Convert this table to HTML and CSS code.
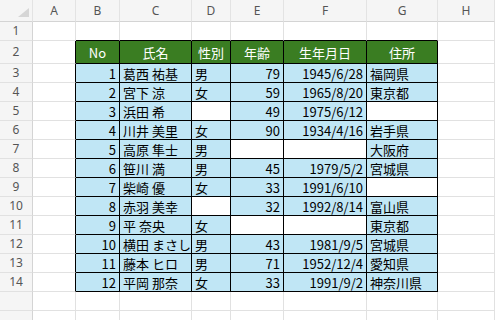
FILE: index.html
```html
<!DOCTYPE html>
<html lang="ja">
<head>
<meta charset="utf-8">
<link rel="stylesheet" href="styles.css">
</head>
<body>
<div class="sheet">
  <div class="r hdr">
    <div class="c w0 corner"><span class="tri"></span></div>
    <div class="c wA ch">A</div>
    <div class="c wB ch">B</div>
    <div class="c wC ch">C</div>
    <div class="c wD ch">D</div>
    <div class="c wE ch">E</div>
    <div class="c wF ch">F</div>
    <div class="c wG ch">G</div>
    <div class="c wH ch">H</div>
  </div>
  <div class="r h19">
    <div class="c w0 rh">1</div>
    <div class="c wA"></div>
    <div class="c wB tt"></div>
    <div class="c wC tt"></div>
    <div class="c wD tt"></div>
    <div class="c wE tt"></div>
    <div class="c wF tt"></div>
    <div class="c wG tt"></div>
    <div class="c wH"></div>
  </div>
  <div class="r h23">
    <div class="c w0 rh">2</div>
    <div class="c wA tl"></div>
    <div class="c wB t th">No</div>
    <div class="c wC t th">氏名</div>
    <div class="c wD t th">性別</div>
    <div class="c wE t th">年齢</div>
    <div class="c wF t th">生年月日</div>
    <div class="c wG t th">住所</div>
    <div class="c wH"></div>
  </div>
  <div class="r h19"><div class="c w0 rh">3</div><div class="c wA tl"></div><div class="c wB t n">1</div><div class="c wC t">葛西 祐基</div><div class="c wD t">男</div><div class="c wE t n">79</div><div class="c wF t n">1945/6/28</div><div class="c wG t">福岡県</div><div class="c wH"></div></div>
  <div class="r h19"><div class="c w0 rh">4</div><div class="c wA tl"></div><div class="c wB t n">2</div><div class="c wC t">宮下 涼</div><div class="c wD t">女</div><div class="c wE t n">59</div><div class="c wF t n">1965/8/20</div><div class="c wG t">東京都</div><div class="c wH"></div></div>
  <div class="r h19"><div class="c w0 rh">5</div><div class="c wA tl"></div><div class="c wB t n">3</div><div class="c wC t">浜田 希</div><div class="c wD t e"></div><div class="c wE t n">49</div><div class="c wF t n">1975/6/12</div><div class="c wG t e"></div><div class="c wH"></div></div>
  <div class="r h19"><div class="c w0 rh">6</div><div class="c wA tl"></div><div class="c wB t n">4</div><div class="c wC t">川井 美里</div><div class="c wD t">女</div><div class="c wE t n">90</div><div class="c wF t n">1934/4/16</div><div class="c wG t">岩手県</div><div class="c wH"></div></div>
  <div class="r h19"><div class="c w0 rh">7</div><div class="c wA tl"></div><div class="c wB t n">5</div><div class="c wC t">高原 隼士</div><div class="c wD t">男</div><div class="c wE t e"></div><div class="c wF t e"></div><div class="c wG t">大阪府</div><div class="c wH"></div></div>
  <div class="r h19"><div class="c w0 rh">8</div><div class="c wA tl"></div><div class="c wB t n">6</div><div class="c wC t">笹川 満</div><div class="c wD t">男</div><div class="c wE t n">45</div><div class="c wF t n">1979/5/2</div><div class="c wG t">宮城県</div><div class="c wH"></div></div>
  <div class="r h19"><div class="c w0 rh">9</div><div class="c wA tl"></div><div class="c wB t n">7</div><div class="c wC t">柴崎 優</div><div class="c wD t">女</div><div class="c wE t n">33</div><div class="c wF t n">1991/6/10</div><div class="c wG t e"></div><div class="c wH"></div></div>
  <div class="r h19"><div class="c w0 rh">10</div><div class="c wA tl"></div><div class="c wB t n">8</div><div class="c wC t">赤羽 美幸</div><div class="c wD t e"></div><div class="c wE t n">32</div><div class="c wF t n">1992/8/14</div><div class="c wG t">富山県</div><div class="c wH"></div></div>
  <div class="r h19"><div class="c w0 rh">11</div><div class="c wA tl"></div><div class="c wB t n">9</div><div class="c wC t">平 奈央</div><div class="c wD t">女</div><div class="c wE t e"></div><div class="c wF t e"></div><div class="c wG t">東京都</div><div class="c wH"></div></div>
  <div class="r h19"><div class="c w0 rh">12</div><div class="c wA tl"></div><div class="c wB t n">10</div><div class="c wC t">横田 まさし</div><div class="c wD t">男</div><div class="c wE t n">43</div><div class="c wF t n">1981/9/5</div><div class="c wG t">宮城県</div><div class="c wH"></div></div>
  <div class="r h19"><div class="c w0 rh">13</div><div class="c wA tl"></div><div class="c wB t n">11</div><div class="c wC t">藤本 ヒロ</div><div class="c wD t">男</div><div class="c wE t n">71</div><div class="c wF t n">1952/12/4</div><div class="c wG t">愛知県</div><div class="c wH"></div></div>
  <div class="r h19"><div class="c w0 rh">14</div><div class="c wA tl"></div><div class="c wB t n">12</div><div class="c wC t">平岡 那奈</div><div class="c wD t">女</div><div class="c wE t n">33</div><div class="c wF t n">1991/9/2</div><div class="c wG t">神奈川県</div><div class="c wH"></div></div>
  <div class="r h19"><div class="c w0 rh"></div><div class="c wA"></div><div class="c wB"></div><div class="c wC"></div><div class="c wD"></div><div class="c wE"></div><div class="c wF"></div><div class="c wG"></div><div class="c wH"></div></div>
  <div class="r h19"><div class="c w0 rh"></div><div class="c wA"></div><div class="c wB"></div><div class="c wC"></div><div class="c wD"></div><div class="c wE"></div><div class="c wF"></div><div class="c wG"></div><div class="c wH"></div></div>
</div>
</body>
</html>
```

FILE: styles.css
```css
html, body {
  margin: 0;
  padding: 0;
  background: #ffffff;
}
body {
  width: 495px;
  height: 320px;
  overflow: hidden;
  font-family: "Noto Sans CJK JP", "Noto Sans", sans-serif;
  font-size: 13px;
  color: #000;
}
.sheet {
  display: flex;
  flex-direction: column;
}
.r {
  display: flex;
  flex: none;
}
.hdr { height: 22px; }
.h19 { height: 19px; }
.h23 { height: 23px; }
.c {
  box-sizing: border-box;
  flex: none;
  display: flex;
  align-items: center;
  white-space: nowrap;
  overflow: hidden;
  border-right: 1px solid #e1e1e1;
  border-bottom: 1px solid #e1e1e1;
  padding: 0 3px;
  line-height: 1;
}
.w0 { width: 33px; }
.wA { width: 43px; }
.wB { width: 44px; }
.wC { width: 72px; }
.wD { width: 39px; }
.wE { width: 53px; }
.wF { width: 83px; }
.wG { width: 71px; }
.wH { flex: 1 1 auto; }

.hdr .c {
  background: #f5f5f5;
  border-bottom-color: #d4d4d4;
  border-right-color: #e3e3e3;
}
.ch {
  justify-content: center;
  font-family: "Noto Sans", sans-serif;
  font-size: 12px;
  color: #555;
}
.corner {
  position: relative;
}
.tri {
  position: absolute;
  right: 3px;
  bottom: 4px;
  width: 0;
  height: 0;
  border-left: 11px solid transparent;
  border-bottom: 9px solid #d6d6d6;
}
.rh {
  background: #f5f5f5;
  border-right-color: #d4d4d4;
  justify-content: center;
  font-family: "Noto Sans", sans-serif;
  font-size: 12px;
  color: #555;
}
.tt { border-bottom-color: #000; }
.tl { border-right-color: #000; }
.t {
  background: #c0e6f5;
  border-right-color: #000;
  border-bottom-color: #000;
}
.t.e { background: #ffffff; }
.th {
  background: #3a7d22;
  color: #ffffff;
  justify-content: center;
}
.n { justify-content: flex-end; }
```
